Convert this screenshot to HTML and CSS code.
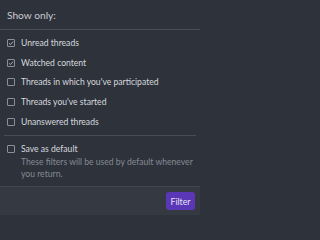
FILE: index.html
```html
<!DOCTYPE html>
<html>
<head>
<meta charset="utf-8">
<link rel="stylesheet" href="styles.css">
</head>
<body>
<div class="menu">
  <div class="menu-header">Show only:</div>
  <div class="menu-body">
    <label class="opt"><span class="box"><svg viewBox="0 0 8 8"><path d="M2 4.2 L3.5 5.6 L6 2.6" /></svg></span>Unread threads</label>
    <label class="opt"><span class="box"><svg viewBox="0 0 8 8"><path d="M2 4.2 L3.5 5.6 L6 2.6" /></svg></span>Watched content</label>
    <label class="opt"><span class="box"></span>Threads in which you've participated</label>
    <label class="opt"><span class="box"></span>Threads you've started</label>
    <label class="opt"><span class="box"></span>Unanswered threads</label>
  </div>
  <div class="menu-save">
    <label class="opt save"><span class="box"></span>Save as default</label>
    <div class="hint">These filters will be used by default whenever you return.</div>
  </div>
  <div class="menu-footer"><button class="btn">Filter</button></div>
</div>
</body>
</html>
```
FILE: styles.css
```css
html, body { margin: 0; padding: 0; }
body {
  background: #2e323b;
  font-family: Lato, "Open Sans", sans-serif;
  color: #d6d9de;
  width: 200px;
  height: 215px;
  overflow: hidden;
}
.menu { display: flex; flex-direction: column; width: 200px; height: 215px; }
.menu-header {
  box-sizing: border-box;
  font-size: 10.2px;
  line-height: 14px;
  color: #c9ccd2;
  padding: 8px 7px 0 7px;
  height: 30px;
  border-bottom: 1px solid #4a4e58;
}
.menu-body {
  display: flex;
  flex-direction: column;
  padding: 3px 0 3px 3px;
  margin: 0 4px;
  border-bottom: 1px solid #484c56;
}
.opt {
  display: flex;
  align-items: center;
  font-size: 8.6px;
  height: 19.75px;
  color: #d6d9de;
  white-space: nowrap;
}
.opt.save { height: 14px; }
.box {
  box-sizing: border-box;
  width: 8px;
  height: 8px;
  border: 1px solid #8a8f99;
  border-radius: 1px;
  margin-right: 6px;
  flex: none;
  position: relative;
}
.box svg {
  position: absolute;
  left: -1px; top: -1px;
  width: 8px; height: 8px;
  fill: none; stroke: #b3b7bf; stroke-width: 0.9;
}
.menu-save {
  padding: 6px 4px 0 7px;
  flex: 1;
}
.hint {
  font-size: 8.6px;
  color: #858a94;
  line-height: 12px;
  padding-left: 14px;
}
.menu-footer {
  box-sizing: border-box;
  height: 29px;
  background: #353942;
  border-top: 1px solid #40444d;
  display: flex;
  justify-content: flex-end;
  align-items: flex-start;
  padding: 5px 5px 0 0;
}
.btn {
  background: #5a37b6;
  color: #e6e3f3;
  border: none;
  border-radius: 3px;
  font-family: Lato, "Open Sans", sans-serif;
  font-size: 8.8px;
  height: 18px;
  width: 29px;
  padding: 0;
}
```
